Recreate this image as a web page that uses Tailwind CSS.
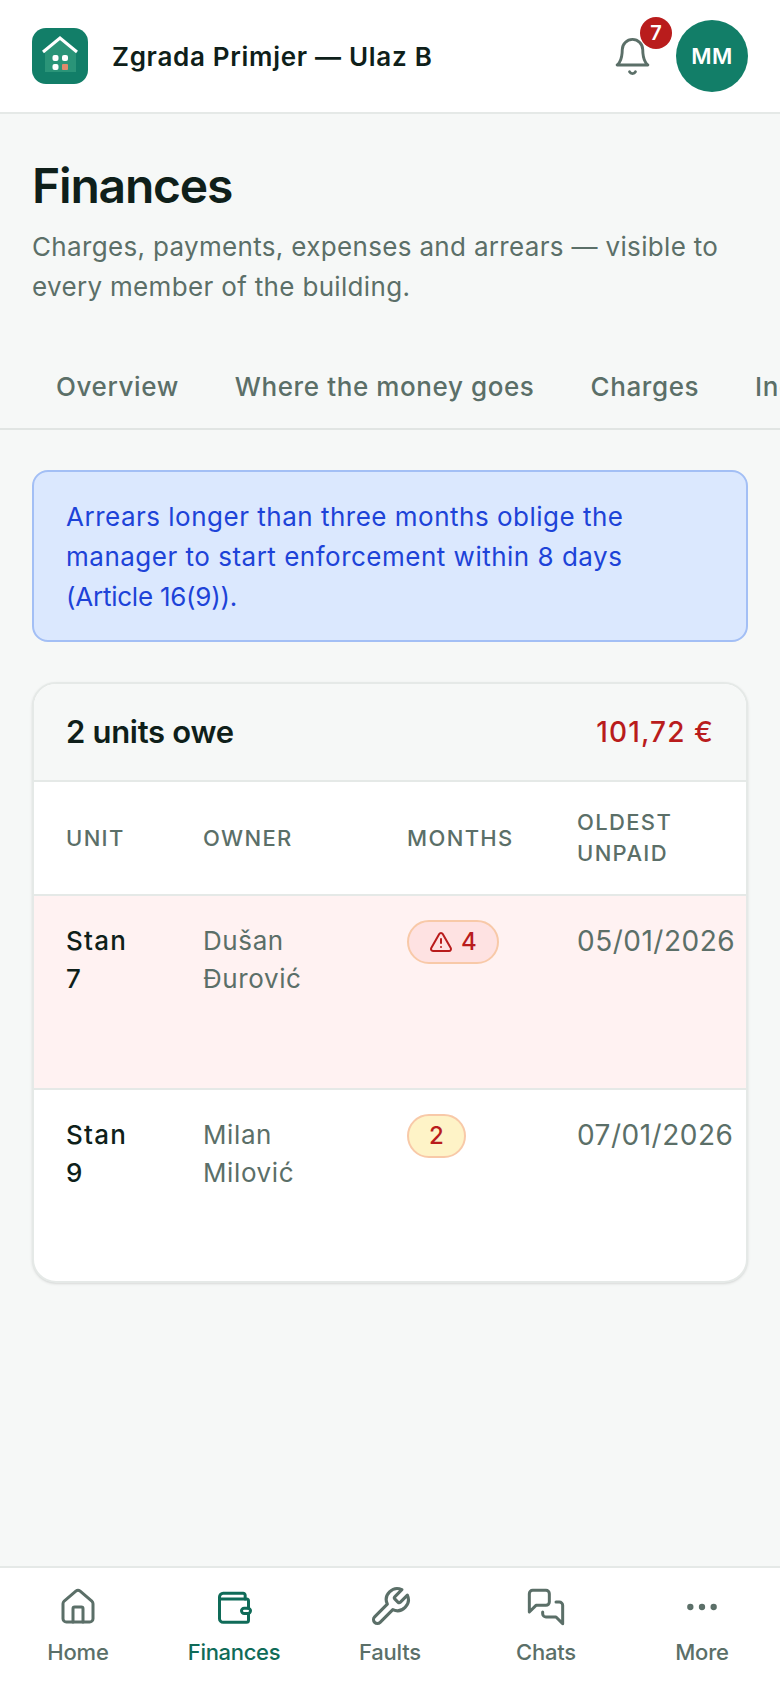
<!DOCTYPE html>
<html lang="en">
<head>
    <meta charset="UTF-8">
    <meta name="viewport" content="width=device-width, initial-scale=1.0">
    <script src="https://cdn.jsdelivr.net/npm/@tailwindcss/browser@4"></script>
    <title>Finances</title>
</head>
<body class="bg-[#f6f8f7] font-['Inter',sans-serif] text-[#0f1f1a] h-[1688px] w-[780px] overflow-hidden flex flex-col">
    <!--header-->
    <header class="h-[114px] shrink-0 bg-white border-b-2 border-[#e5e9e7] flex items-center pl-8 pr-8">
        <svg class="w-14 h-14 shrink-0" viewBox="0 0 56 56">
            <rect width="56" height="56" rx="14" fill="#127e68"/>
            <path d="M13 23 L28 11 L44 23 V44 H13 Z" fill="#2a9478"/>
            <path d="M11 24 L28 10 L45 24" fill="none" stroke="#fff" stroke-width="3"/>
            <rect x="20.5" y="27" width="6" height="6" rx="2" fill="#fff"/>
            <rect x="30" y="27" width="6" height="6" rx="2" fill="#fff"/>
            <rect x="20.5" y="36" width="6" height="6" rx="2" fill="#fff"/>
            <rect x="30" y="36" width="6" height="6" rx="1" fill="#e08a6c"/>
        </svg>
        <div class="ml-6 text-[26px] font-semibold tracking-[0.7px]">Zgrada Primjer — Ulaz B</div>
        <div class="ml-auto relative w-[41px] h-[41px] mr-[23px]">
            <svg class="w-[41px] h-[41px]" viewBox="0 0 24 24" fill="none" stroke="#5b6f68" stroke-width="1.7" stroke-linecap="round" stroke-linejoin="round"><path d="M6 8a6 6 0 0 1 12 0c0 7 3 9 3 9H3s3-2 3-9"/><path d="M10.3 21a1.94 1.94 0 0 0 3.4 0"/></svg>
            <span class="absolute left-[28px] top-[-19px] w-8 h-8 rounded-full bg-[#b91c1c] text-white text-[20px] font-semibold flex items-center justify-center">7</span>
        </div>
        <div class="w-[72px] h-[72px] rounded-full bg-[#127e68] text-white text-[22px] font-semibold tracking-[0.5px] flex items-center justify-center">MM</div>
    </header>

    <main class="flex-1 min-h-0">
        <div class="px-8 pt-[42px]">
            <h1 class="text-[48px] leading-[60px] font-semibold tracking-[-1.2px]">Finances</h1>
            <p class="mt-[11px] text-[26px] leading-[40px] tracking-[0.33px] text-[#5b6f68]">Charges, payments, expenses and arrears — visible to every member of the building.</p>
        </div>

        <!--tabs-->
        <div class="mt-[37px] h-[86px] border-b-2 border-[#e1e5e3] flex overflow-hidden pl-[28px] text-[26px] font-medium tracking-[0.6px] text-[#5b6f68]">
            <div class="px-[28px] flex items-center whitespace-nowrap">Overview</div>
            <div class="px-[28px] flex items-center whitespace-nowrap">Where the money goes</div>
            <div class="px-[28px] flex items-center whitespace-nowrap">Charges</div>
            <div class="px-[28px] flex items-center whitespace-nowrap">Income</div>
        </div>

        <div class="px-8 pt-10">
            <div class="rounded-2xl border-2 border-[#a3bff5] bg-[#dbe8fe] text-[#1d43d8] text-[26px] leading-[40px] tracking-[0.5px] px-8 pt-[25px] pb-[23px]">
                Arrears longer than three months oblige the manager to start enforcement within 8 days <span class="tracking-[-0.24px]">(Article 16(9)).</span>
            </div>

            <div class="mt-10 rounded-[24px] border-2 border-[#e5e9e7] bg-white overflow-hidden shadow-sm">
                <div class="h-[98px] bg-[#f6f8f7] border-b-2 border-[#e5e9e7] flex items-center justify-between px-8">
                    <span class="text-[31px] font-semibold tracking-[-0.3px]">2 units owe</span>
                    <span class="text-[28px] font-medium tracking-[1.1px] text-[#b91c1c]">101,72 €</span>
                </div>
                <div class="h-[114px] grid grid-cols-[137px_204px_170px_1fr] items-center px-8 border-b-2 border-[#e5e9e7] text-[22px] leading-[31px] tracking-[1.35px] text-[#5b6f68] font-medium">
                    <div>UNIT</div>
                    <div>OWNER</div>
                    <div>MONTHS</div>
                    <div>OLDEST<br>UNPAID</div>
                </div>
                <div class="h-[194px] grid grid-cols-[137px_204px_170px_1fr] px-8 pt-[26px] border-b-2 border-[#e5e9e7] bg-[#fff2f2] text-[26px] leading-[38px]">
                    <div class="font-medium tracking-[1.2px]">Stan<br>7</div>
                    <div class="text-[#5b6f68] tracking-[0.6px]">Dušan<br>Đurović</div>
                    <div class="-mt-[2px]"><span class="inline-flex items-center gap-[8px] h-[44px] px-[20px] rounded-full bg-[#fee2e2] border-2 border-[#f8c9a8] text-[#b91c1c] text-[24px] font-medium">
                        <svg class="w-6 h-6" viewBox="0 0 24 24" fill="none" stroke="currentColor" stroke-width="2" stroke-linecap="round" stroke-linejoin="round"><path d="m21.73 18-8-14a2 2 0 0 0-3.48 0l-8 14A2 2 0 0 0 4 21h16a2 2 0 0 0 1.73-3"/><path d="M12 9v4"/><path d="M12 17h.01"/></svg>4</span></div>
                    <div class="text-[#5b6f68] text-[28px] tracking-[0.5px] whitespace-nowrap">05/01/2026</div>
                </div>
                <div class="h-[191px] grid grid-cols-[137px_204px_170px_1fr] px-8 pt-[26px] text-[26px] leading-[38px]">
                    <div class="font-medium tracking-[1.2px]">Stan<br>9</div>
                    <div class="text-[#5b6f68] tracking-[0.6px]">Milan<br>Milović</div>
                    <div class="-mt-[2px]"><span class="inline-flex items-center h-[44px] px-[20px] rounded-full bg-[#fef3c7] border-2 border-[#f8c9a8] text-[#b91c1c] text-[24px] font-medium">2</span></div>
                    <div class="text-[#5b6f68] text-[28px] tracking-[0.5px] whitespace-nowrap">07/01/2026</div>
                </div>
            </div>
        </div>
    </main>

    <!--navegacion inferior-->
    <nav class="h-[122px] shrink-0 bg-white border-t-2 border-[#e5e9e7] grid grid-cols-5 text-[22px] font-medium tracking-[-0.2px] text-[#5b6f68]">
        <div class="flex flex-col items-center pt-[19px]">
            <svg class="w-10 h-10" viewBox="0 0 24 24" fill="none" stroke="currentColor" stroke-width="1.8" stroke-linecap="round" stroke-linejoin="round"><path d="M15 21v-8a1 1 0 0 0-1-1h-4a1 1 0 0 0-1 1v8"/><path d="M3 10a2 2 0 0 1 .709-1.528l7-5.999a2 2 0 0 1 2.582 0l7 5.999A2 2 0 0 1 21 10v9a2 2 0 0 1-2 2H5a2 2 0 0 1-2-2z"/></svg>
            <span class="mt-[9px]">Home</span>
        </div>
        <div class="flex flex-col items-center pt-[19px] text-[#0f6b58]">
            <svg class="w-10 h-10" viewBox="0 0 24 24" fill="none" stroke="currentColor" stroke-width="1.8" stroke-linecap="round" stroke-linejoin="round"><path d="M18.7 7.2V5a1.2 1.2 0 0 0-1.2-1.2H5.5a2.2 2.2 0 0 0-2.2 2.2v13a2.2 2.2 0 0 0 2.2 2.2h14a1.2 1.2 0 0 0 1.2-1.2v-4.1"/><path d="M3.3 7.2h16.2a1.2 1.2 0 0 1 1.2 1.2v4.3"/><rect x="16.5" y="12.7" width="5.4" height="3.2" rx="1.6"/></svg>
            <span class="mt-[9px] tracking-[-0.3px]">Finances</span>
        </div>
        <div class="flex flex-col items-center pt-[17px]">
            <svg class="w-11 h-11" viewBox="0 0 24 24" fill="none" stroke="currentColor" stroke-width="1.7" stroke-linecap="round" stroke-linejoin="round"><path d="M14.7 6.3a1 1 0 0 0 0 1.4l1.6 1.6a1 1 0 0 0 1.4 0l3.77-3.77a6 6 0 0 1-7.94 7.94l-6.91 6.91a2.12 2.12 0 0 1-3-3l6.91-6.91a6 6 0 0 1 7.94-7.94l-3.76 3.76z"/></svg>
            <span class="mt-[7px]">Faults</span>
        </div>
        <div class="flex flex-col items-center pt-[19px]">
            <svg class="w-10 h-10" viewBox="0 0 24 24" fill="none" stroke="currentColor" stroke-width="1.8" stroke-linecap="round" stroke-linejoin="round"><path d="M14 9a2 2 0 0 1-2 2H6l-4 4V4a2 2 0 0 1 2-2h8a2 2 0 0 1 2 2z"/><path d="M18 9h2a2 2 0 0 1 2 2v11l-4-4h-6a2 2 0 0 1-2-2v-1"/></svg>
            <span class="mt-[9px]">Chats</span>
        </div>
        <div class="flex flex-col items-center pt-[19px]">
            <svg class="w-10 h-10" viewBox="0 0 24 24" fill="none" stroke="currentColor" stroke-width="1.8" stroke-linecap="round" stroke-linejoin="round"><circle cx="12" cy="12" r="1"/><circle cx="19" cy="12" r="1"/><circle cx="5" cy="12" r="1"/></svg>
            <span class="mt-[9px]">More</span>
        </div>
    </nav>
</body>
</html>
